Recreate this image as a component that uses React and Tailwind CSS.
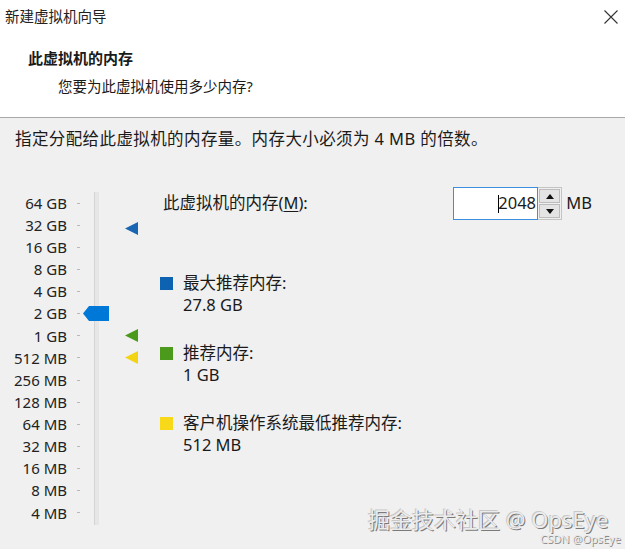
import React from "react";

const FONT = { fontFamily: '"Noto Sans", "Noto Sans CJK SC", sans-serif' };

const labels = [
  "64 GB", "32 GB", "16 GB", "8 GB", "4 GB", "2 GB", "1 GB", "512 MB",
  "256 MB", "128 MB", "64 MB", "32 MB", "16 MB", "8 MB", "4 MB",
];

function Tri({ color, top }) {
  return (
    <svg className="absolute left-[125px]" style={{ top }} width="14" height="13" viewBox="0 0 14 13">
      <polygon points="0,6.5 13,0 13,13" fill={color} />
    </svg>
  );
}

function Legend({ color, title, value }) {
  return (
    <div className="flex items-start">
      <div className="w-[13px] h-[13px] mt-[5px]" style={{ background: color }} />
      <div className="ml-[10px] leading-[22px]">
        <div>{title}</div>
        <div>{value}</div>
      </div>
    </div>
  );
}

export default function App() {
  return (
    <div className="w-[625px] h-[549px] bg-[#f0f0f0] text-[#1a1a1a] overflow-hidden relative" style={FONT}>
      {/* header */}
      <div className="h-[118px] bg-white border-b border-[#a8a8a8]">
        <div className="h-[34px] flex items-center justify-between pl-[5px] pr-[5px]">
          <span className="text-[14.5px] text-[#222]">新建虚拟机向导</span>
          <svg width="16" height="16" viewBox="0 0 16 16" className="mr-[1px]">
            <path d="M1.5 1.5 L14.5 14.5 M14.5 1.5 L1.5 14.5" stroke="#333" strokeWidth="1.1" fill="none" />
          </svg>
        </div>
        <div className="mt-[13px] pl-[28px] text-[15px] font-bold leading-[22px]">此虚拟机的内存</div>
        <div className="mt-[6px] pl-[58px] text-[14.5px] leading-[22px]">您要为此虚拟机使用多少内存?</div>
      </div>

      {/* body */}
      <div className="pt-[9px] text-[16.5px]">
        <div className="pl-[15px] leading-[24px] tracking-[0.4px]">指定分配给此虚拟机的内存量。内存大小必须为 4 MB 的倍数。</div>

        <div className="mt-[41px] flex">
          {/* scale */}
          <div className="relative flex w-[160px] shrink-0">
            <div className="w-[67px] flex flex-col">
              {labels.map((l) => (
                <div key={l} className="h-[22.14px] flex items-center justify-end text-[15px] text-[#222] whitespace-nowrap">{l}</div>
              ))}
            </div>
            <div className="ml-[10px] w-[3px] flex flex-col">
              {labels.map((l) => (
                <div key={l} className="h-[22.14px] flex items-center">
                  <div className="w-[3px] h-[1px] bg-[#b8b8b8]" />
                </div>
              ))}
            </div>
            <div className="ml-[14px] w-[5px] h-[333px] bg-[#e6e6e6] border-l border-[#d4d4d4]" />
            <svg className="absolute left-[83px] top-[114px]" width="26" height="15" viewBox="0 0 26 15">
              <polygon points="0,7.5 6,0 26,0 26,15 6,15" fill="#0078d7" />
            </svg>
            <Tri color="#1a66b3" top="30px" />
            <Tri color="#4b9a1b" top="137px" />
            <Tri color="#f2d413" top="159px" />
          </div>

          {/* right */}
          <div className="flex-1 pr-[33px]">
            <div className="flex items-center h-[33px] -mt-[5px]">
              <span className="pl-[3px] flex-1">
                此虚拟机的内存(<span className="underline underline-offset-2">M</span>):
              </span>
              <div className="flex h-[33px]">
                <div className="w-[85px] h-[33px] bg-white border border-[#3d8ee0] flex items-center justify-end pr-[1px]">
                  <span className="w-[1px] h-[18px] bg-black" />
                  <span className="text-[16.5px] mr-[1px] ml-[-1px] w-[37px] text-right">2048</span>
                </div>
                <div className="w-[24px] flex flex-col border border-l-0 border-[#c4c4c4] bg-[#f0f0f0] p-[1px] gap-[1px]">
                  <div className="flex-1 bg-[#e4e4e4] border border-[#bcbcbc] flex items-center justify-center">
                    <svg width="8" height="5" viewBox="0 0 8 5"><polygon points="4,0 8,5 0,5" fill="#111" /></svg>
                  </div>
                  <div className="flex-1 bg-[#e4e4e4] border border-[#bcbcbc] flex items-center justify-center">
                    <svg width="8" height="5" viewBox="0 0 8 5"><polygon points="0,0 8,0 4,5" fill="#111" /></svg>
                  </div>
                </div>
              </div>
              <span className="ml-[4px]">MB</span>
            </div>

            <div className="mt-[52px] flex flex-col gap-[26px]">
              <Legend color="#0d62b1" title="最大推荐内存:" value="27.8 GB" />
              <Legend color="#4b9a1b" title="推荐内存:" value="1 GB" />
              <Legend color="#f8d91a" title="客户机操作系统最低推荐内存:" value="512 MB" />
            </div>
          </div>
        </div>
      </div>

      {/* watermarks */}
      <div
        className="absolute left-[368px] top-[505px] text-[22px] text-[#ececec] whitespace-nowrap leading-[28px]"
        style={{ textShadow: "1px 1px 0 #7a7a7a, -1px -1px 0 #c8c8c8" }}
      >
        掘金技术社区 @ OpsEye
      </div>
      <div
        className="absolute left-[540px] top-[532px] text-[11px] text-[#e8e8e8] whitespace-nowrap leading-[14px]"
        style={{ textShadow: "1px 1px 0 #8a8a8a" }}
      >
        CSDN @OpsEye
      </div>
    </div>
  );
}
